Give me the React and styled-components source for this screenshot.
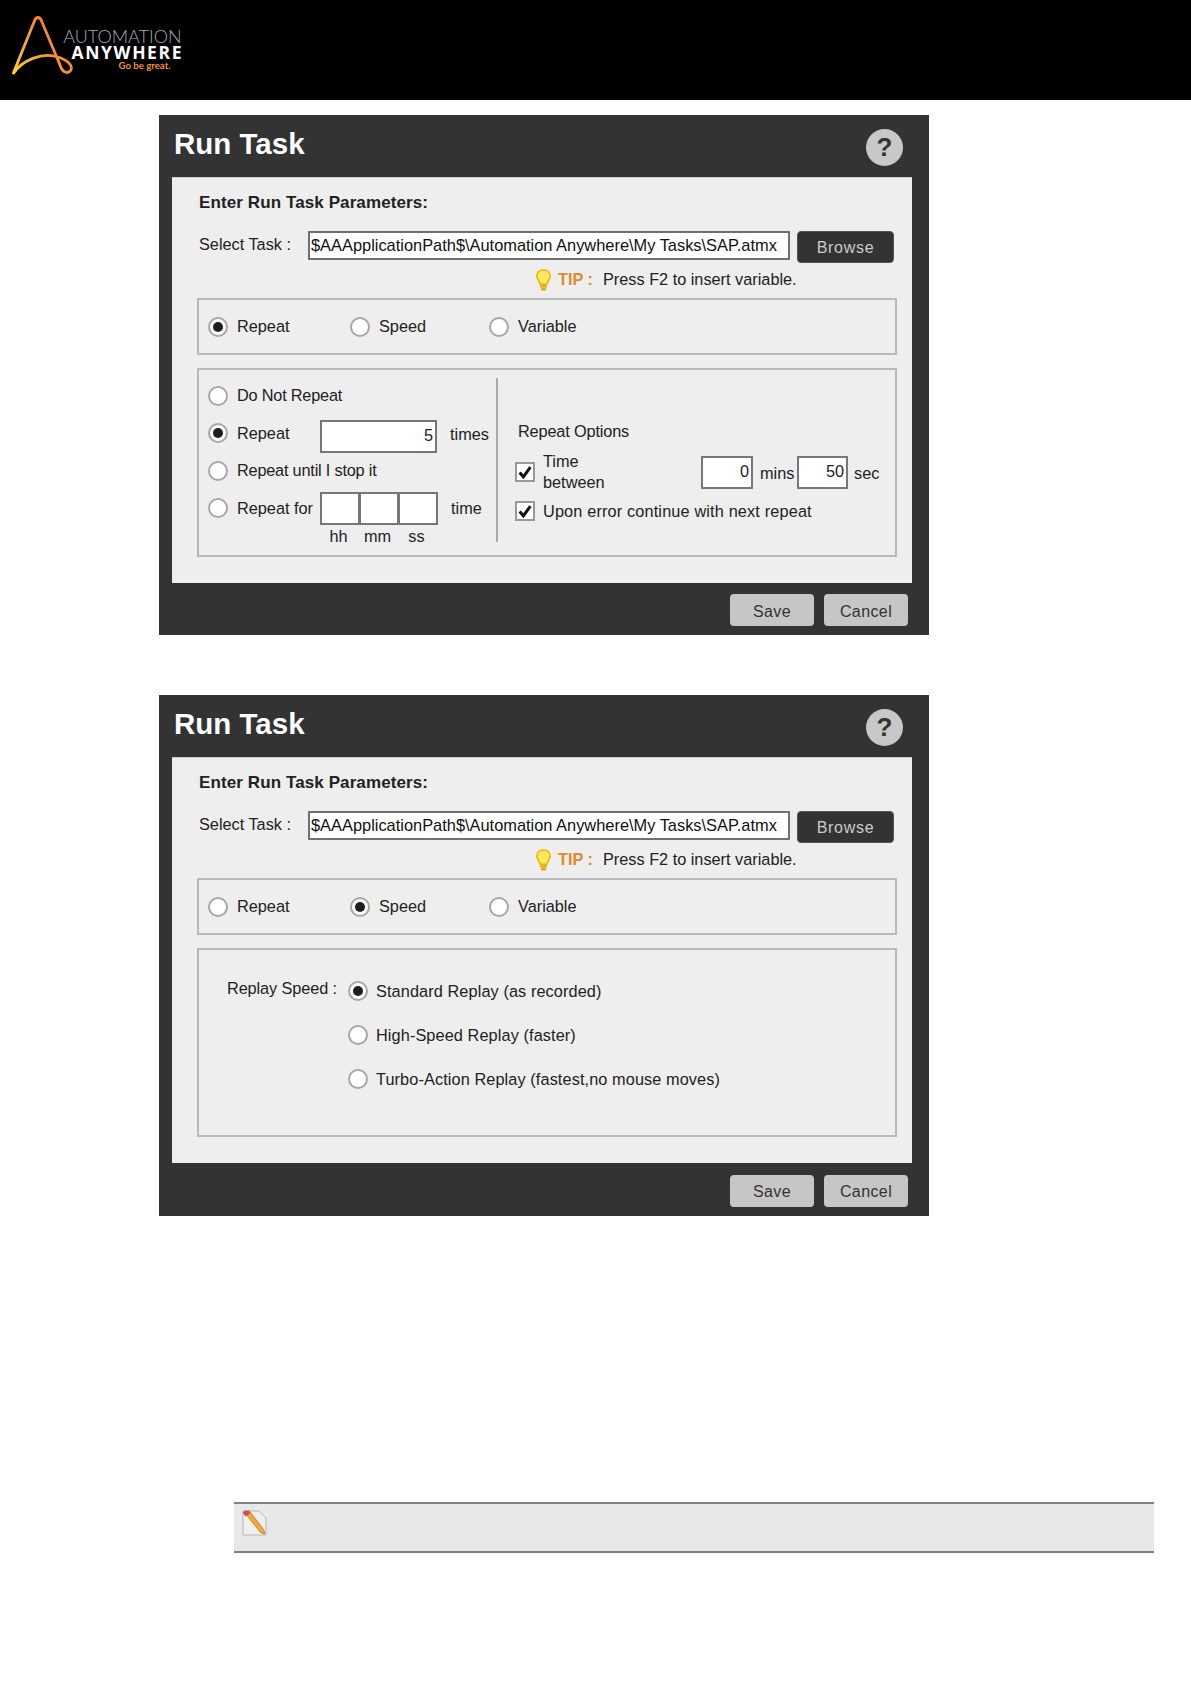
import React from 'react';
import styled, { createGlobalStyle } from 'styled-components';

const GlobalStyle = createGlobalStyle`
  html, body {
    margin: 0;
    padding: 0;
    background: #fff;
    font-family: "Liberation Sans", Arial, sans-serif;
  }
`;

const Page = styled.div`
  width: 1191px;
  height: 1684px;
  overflow: hidden;
`;

const Header = styled.header`
  height: 100px;
  background: #000;
  display: flex;
  align-items: flex-start;
`;

const LogoMark = styled.svg`
  width: 75px;
  height: 80px;
  margin-left: 10px;
  margin-top: 10px;
  flex: none;
`;

const LogoText = styled.div`
  display: flex;
  flex-direction: column;
  align-items: flex-end;
  width: 117.5px;
  margin-left: -21px;
  padding-top: 28px;
`;

const LogoThin = styled.span`
  font-family: Lato, sans-serif;
  font-weight: 300;
  font-size: 18px;
  line-height: 16px;
  color: #a8a8a8;
`;

const LogoBold = styled.span`
  font-family: "Open Sans", sans-serif;
  font-weight: 700;
  font-size: 17.5px;
  line-height: 16px;
  color: #fff;
  letter-spacing: 1.6px;
  margin-right: -1.6px;
`;

const LogoTag = styled.span`
  font-family: Lato, sans-serif;
  font-weight: 700;
  font-size: 9.6px;
  line-height: 11px;
  color: #f0923a;
  margin-right: 11px;
`;

const Dialog = styled.section`
  width: 770px;
  height: ${(p) => p.$height}px;
  margin-left: 159px;
  margin-top: ${(p) => p.$top}px;
  background: #333;
  box-sizing: border-box;
  display: flex;
  flex-direction: column;
`;

const TitleBar = styled.div`
  height: 62px;
  padding: 0 26px 0 15px;
  display: flex;
  align-items: center;
  justify-content: space-between;
`;

const Title = styled.h2`
  margin: 0 0 5px;
  color: #fff;
  font-size: 29.5px;
  font-weight: 700;
`;

const HelpIcon = styled.div`
  width: 37px;
  height: 37px;
  margin-top: 3px;
  border-radius: 50%;
  background: #c8c8c8;
  color: #333;
  font-size: 26px;
  font-weight: 700;
  display: flex;
  align-items: center;
  justify-content: center;
`;

const Panel = styled.div`
  width: 740px;
  margin-left: 13px;
  height: 406px;
  padding: 0 15px 0 25px;
  box-sizing: border-box;
  background: #eee;
  border-top: 1px solid #ccc;
  color: #222;
  font-size: 16.3px;
`;

const Heading = styled.div`
  margin-top: 14px;
  height: 22px;
  line-height: 22px;
  padding-left: 2px;
  font-size: 17px;
  letter-spacing: 0.1px;
  font-weight: 700;
  color: #222;
`;

const TaskRow = styled.div`
  margin-top: 17px;
  height: 32px;
  display: flex;
  align-items: center;
  padding-left: 2px;
`;

const TaskLabel = styled.span`
  width: 109px;
  flex: none;
  margin-bottom: 5px;
`;

const PathField = styled.div`
  width: 482px;
  height: 29px;
  margin-bottom: 4px;
  box-sizing: border-box;
  background: #fff;
  border: 2px solid #707070;
  padding-left: 1px;
  font-size: 16.4px;
  line-height: 24px;
  color: #111;
  white-space: nowrap;
`;

const BrowseButton = styled.div`
  width: 97px;
  height: 32px;
  margin-left: 7px;
  padding-top: 2px;
  box-sizing: border-box;
  background: #333;
  border: 1px solid #555;
  border-radius: 4px;
  color: #ccc;
  font-size: 16px;
  letter-spacing: 0.7px;
  display: flex;
  align-items: center;
  justify-content: center;
`;

const TipRow = styled.div`
  height: 35px;
  padding: 0 0 2px 338px;
  box-sizing: border-box;
  display: flex;
  align-items: center;
`;

const TipLabel = styled.span`
  margin-left: 6px;
  margin-right: 10px;
  color: #e08a2c;
  font-weight: 700;
`;

const Box = styled.div`
  width: 700px;
  box-sizing: border-box;
  border: 2px solid #b9b9b9;
`;

const TabBox = styled(Box)`
  height: 57px;
  padding-left: 9px;
  display: flex;
  align-items: center;
`;

const TabOption = styled.div`
  width: ${(p) => p.$width}px;
  display: flex;
  align-items: center;
  gap: 9px;
`;

const BodyBox = styled(Box)`
  height: 189px;
  margin-top: 13px;
  display: flex;
`;

const RepeatColumn = styled.div`
  width: 297px;
  padding: 7px 0 0 9px;
  box-sizing: border-box;
  flex: none;
`;

const RepeatRow = styled.div`
  height: 37.5px;
  display: flex;
  align-items: center;
`;

const RadioLabel = styled.span`
  margin-left: 9px;
  width: ${(p) => p.$width || 'auto'};
  letter-spacing: ${(p) => p.$tight ? '-0.2px' : '0'};
  flex: none;
`;

const Radio = styled.span`
  width: 20px;
  height: 20px;
  flex: none;
  box-sizing: border-box;
  border-radius: 50%;
  border: 2px solid #a6a6a6;
  background: #fff;
  display: flex;
  align-items: center;
  justify-content: center;
  &::after {
    content: '';
    width: 10px;
    height: 10px;
    border-radius: 50%;
    background: ${(p) => (p.$on ? '#1e1e1e' : 'transparent')};
  }
`;

const NumField = styled.div`
  width: ${(p) => p.$width}px;
  height: ${(p) => p.$height}px;
  flex: none;
  box-sizing: border-box;
  background: #fff;
  border: 2px solid #777;
  margin-left: ${(p) => p.$overlap || 0}px;
  margin-top: ${(p) => p.$drop || 0}px;
  padding-right: 2px;
  text-align: right;
  line-height: 26px;
`;

const Unit = styled.span`
  margin-left: ${(p) => p.$left}px;
  margin-top: ${(p) => p.$drop || 0}px;
  width: ${(p) => p.$width || 'auto'};
  flex: none;
`;

const UnitsRow = styled.div`
  display: flex;
  padding-left: 111px;
  margin-top: -1px;
  height: 20px;
  line-height: 20px;
`;

const UnitCell = styled.span`
  width: 39px;
  text-align: center;
`;

const Divider = styled.div`
  width: 2px;
  margin: 8px 0 13px;
  background: #aaa;
  flex: none;
`;

const OptionsColumn = styled.div`
  padding: 51px 0 0 17px;
`;

const OptionsTitle = styled.div`
  height: 20px;
  line-height: 20px;
  padding-left: 3px;
  letter-spacing: -0.15px;
`;

const OptionRow = styled.div`
  display: flex;
  align-items: center;
  height: ${(p) => p.$height}px;
  margin-top: ${(p) => p.$top || 0}px;
`;

const Check = styled.span`
  width: 20px;
  height: 20px;
  flex: none;
  box-sizing: border-box;
  background: #fff;
  border: 2px solid #999;
  display: flex;
  align-items: center;
  justify-content: center;
`;

const TwoLine = styled.span`
  width: 150px;
  margin-left: 8px;
  flex: none;
  line-height: 21px;
  margin-top: -1px;
  margin-right: 8px;
`;

const OptionText = styled.span`
  margin-left: 8px;
  letter-spacing: 0.15px;
`;

const SpeedBody = styled(BodyBox)`
  padding: 19px 0 0 28px;
  gap: 10px;
  align-items: flex-start;
`;

const SpeedLabel = styled.span`
  width: 109px;
  line-height: 22px;
  white-space: nowrap;
  flex: none;
  margin-top: 8px;
  letter-spacing: -0.1px;
`;

const SpeedList = styled.div`
  display: flex;
  flex-direction: column;
  padding-left: 2px;
`;

const SpeedOption = styled.div`
  height: 44px;
  display: flex;
  align-items: center;
  gap: 8px;
  letter-spacing: 0.1px;
`;

const Footer = styled.div`
  flex: 1;
  display: flex;
  justify-content: flex-end;
  align-items: center;
  gap: 10px;
  padding: 2px 21px 0 0;
`;

const GrayButton = styled.div`
  width: 84px;
  height: 32px;
  padding-top: 3px;
  box-sizing: border-box;
  background: #c6c6c6;
  border-radius: 4px;
  color: #333;
  font-size: 16px;
  letter-spacing: 0.4px;
  display: flex;
  align-items: center;
  justify-content: center;
`;

const NoteBar = styled.div`
  width: 920px;
  height: 51px;
  margin-left: 234px;
  margin-top: 286px;
  padding: 6px 0 0 8px;
  box-sizing: border-box;
  background: #e8e8e8;
  border-top: 2px solid #808080;
  border-bottom: 2px solid #808080;
`;

const CheckMark = () => (
  <svg width="14" height="14" viewBox="0 0 13 13">
    <path d="M1.5 7 L5 11 L11.5 2" fill="none" stroke="#111" strokeWidth="2.8" />
  </svg>
);

const Bulb = () => (
  <svg width="17" height="22" viewBox="0 0 17 23">
    <path d="M8.5 1 C4 1 1.5 4 1.5 7.5 C1.5 11 4.5 12.5 5 16 H12 C12.5 12.5 15.5 11 15.5 7.5 C15.5 4 13 1 8.5 1 Z" fill="#ffe95a" stroke="#e8b400" strokeWidth="1.6" />
    <rect x="5" y="17" width="7" height="2.4" fill="#dca800" />
    <rect x="6" y="20" width="5" height="2.4" fill="#dca800" />
  </svg>
);

const LogoA = () => (
  <LogoMark viewBox="0 0 75 80">
    <defs>
      <linearGradient id="aGrad" x1="0" y1="1" x2="1" y2="0.3">
        <stop offset="0" stopColor="#ffd02e" />
        <stop offset="0.55" stopColor="#f59a34" />
        <stop offset="1" stopColor="#ee6a35" />
      </linearGradient>
    </defs>
    <path
      d="M3 64 L24 12 C26 6 30 6 32 12 L50 55 C52 62 58 65 61 60 C63 55 57 50 48 47 C32 42 12 50 3 64"
      fill="none"
      stroke="url(#aGrad)"
      strokeWidth="2.8"
    />
  </LogoMark>
);

const NoteIcon = () => (
  <svg width="25" height="26" viewBox="0 0 25 26">
    <path d="M1 1 H17 L24 8 V25 H1 Z" fill="#efefef" stroke="#b5b5b5" />
    <path d="M3 3 L7 0.5 L22 20 L22.5 24 L18.5 22.5 Z" fill="#f0a93a" stroke="#b9791e" strokeWidth="0.8" />
    <path d="M1 3 C1 1 4 -0.5 6.5 1 L8 3.5 L3.5 6.5 Z" fill="#c9505a" />
  </svg>
);

const TabRow = ({ active }) => (
  <TabBox>
    <TabOption $width={142}>
      <Radio $on={active === 'repeat'} />
      Repeat
    </TabOption>
    <TabOption $width={139}>
      <Radio $on={active === 'speed'} />
      Speed
    </TabOption>
    <TabOption $width={120}>
      <Radio $on={active === 'variable'} />
      Variable
    </TabOption>
  </TabBox>
);

const RepeatBody = () => (
  <BodyBox>
    <RepeatColumn>
      <RepeatRow>
        <Radio />
        <RadioLabel $tight>Do Not Repeat</RadioLabel>
      </RepeatRow>
      <RepeatRow>
        <Radio $on />
        <RadioLabel $width="83px">Repeat</RadioLabel>
        <NumField $width={117} $height={33} $drop={6}>5</NumField>
        <Unit $left={13} $drop={3}>times</Unit>
      </RepeatRow>
      <RepeatRow>
        <Radio />
        <RadioLabel $tight>Repeat until I stop it</RadioLabel>
      </RepeatRow>
      <RepeatRow>
        <Radio />
        <RadioLabel $width="83px">Repeat for</RadioLabel>
        <NumField $width={40} $height={33} />
        <NumField $width={40} $height={33} $overlap={-1} />
        <NumField $width={40} $height={33} $overlap={-1} />
        <Unit $left={13} $drop={1}>time</Unit>
      </RepeatRow>
      <UnitsRow>
        <UnitCell>hh</UnitCell>
        <UnitCell>mm</UnitCell>
        <UnitCell>ss</UnitCell>
      </UnitsRow>
    </RepeatColumn>
    <Divider />
    <OptionsColumn>
      <OptionsTitle>Repeat Options</OptionsTitle>
      <OptionRow $height={42} $top={10}>
        <Check><CheckMark /></Check>
        <TwoLine>Time<br />between</TwoLine>
        <NumField $width={52} $height={33}>0</NumField>
        <Unit $left={7} $width="37px" $drop={2}>mins</Unit>
        <NumField $width={51} $height={33}>50</NumField>
        <Unit $left={6} $drop={3}>sec</Unit>
      </OptionRow>
      <OptionRow $height={36}>
        <Check><CheckMark /></Check>
        <OptionText>Upon error continue with next repeat</OptionText>
      </OptionRow>
    </OptionsColumn>
  </BodyBox>
);

const ReplayBody = () => (
  <SpeedBody>
    <SpeedLabel>Replay Speed :</SpeedLabel>
    <SpeedList>
      <SpeedOption><Radio $on />Standard Replay (as recorded)</SpeedOption>
      <SpeedOption><Radio />High-Speed Replay (faster)</SpeedOption>
      <SpeedOption><Radio />Turbo-Action Replay (fastest,no mouse moves)</SpeedOption>
    </SpeedList>
  </SpeedBody>
);

const RunTaskDialog = ({ active, top, height, children }) => (
  <Dialog $top={top} $height={height}>
    <TitleBar>
      <Title>Run Task</Title>
      <HelpIcon>?</HelpIcon>
    </TitleBar>
    <Panel>
      <Heading>Enter Run Task Parameters:</Heading>
      <TaskRow>
        <TaskLabel>Select Task :</TaskLabel>
        <PathField>$AAApplicationPath$\Automation Anywhere\My Tasks\SAP.atmx</PathField>
        <BrowseButton>Browse</BrowseButton>
      </TaskRow>
      <TipRow>
        <Bulb />
        <TipLabel>TIP :</TipLabel>
        Press F2 to insert variable.
      </TipRow>
      <TabRow active={active} />
      {children}
    </Panel>
    <Footer>
      <GrayButton>Save</GrayButton>
      <GrayButton>Cancel</GrayButton>
    </Footer>
  </Dialog>
);

export default function App() {
  return (
    <Page>
      <GlobalStyle />
      <Header>
        <LogoA />
        <LogoText>
          <LogoThin>AUTOMATION</LogoThin>
          <LogoBold>ANYWHERE</LogoBold>
          <LogoTag>Go be great.</LogoTag>
        </LogoText>
      </Header>
      <RunTaskDialog active="repeat" top={15} height={520}>
        <RepeatBody />
      </RunTaskDialog>
      <RunTaskDialog active="speed" top={60} height={521}>
        <ReplayBody />
      </RunTaskDialog>
      <NoteBar>
        <NoteIcon />
      </NoteBar>
    </Page>
  );
}
